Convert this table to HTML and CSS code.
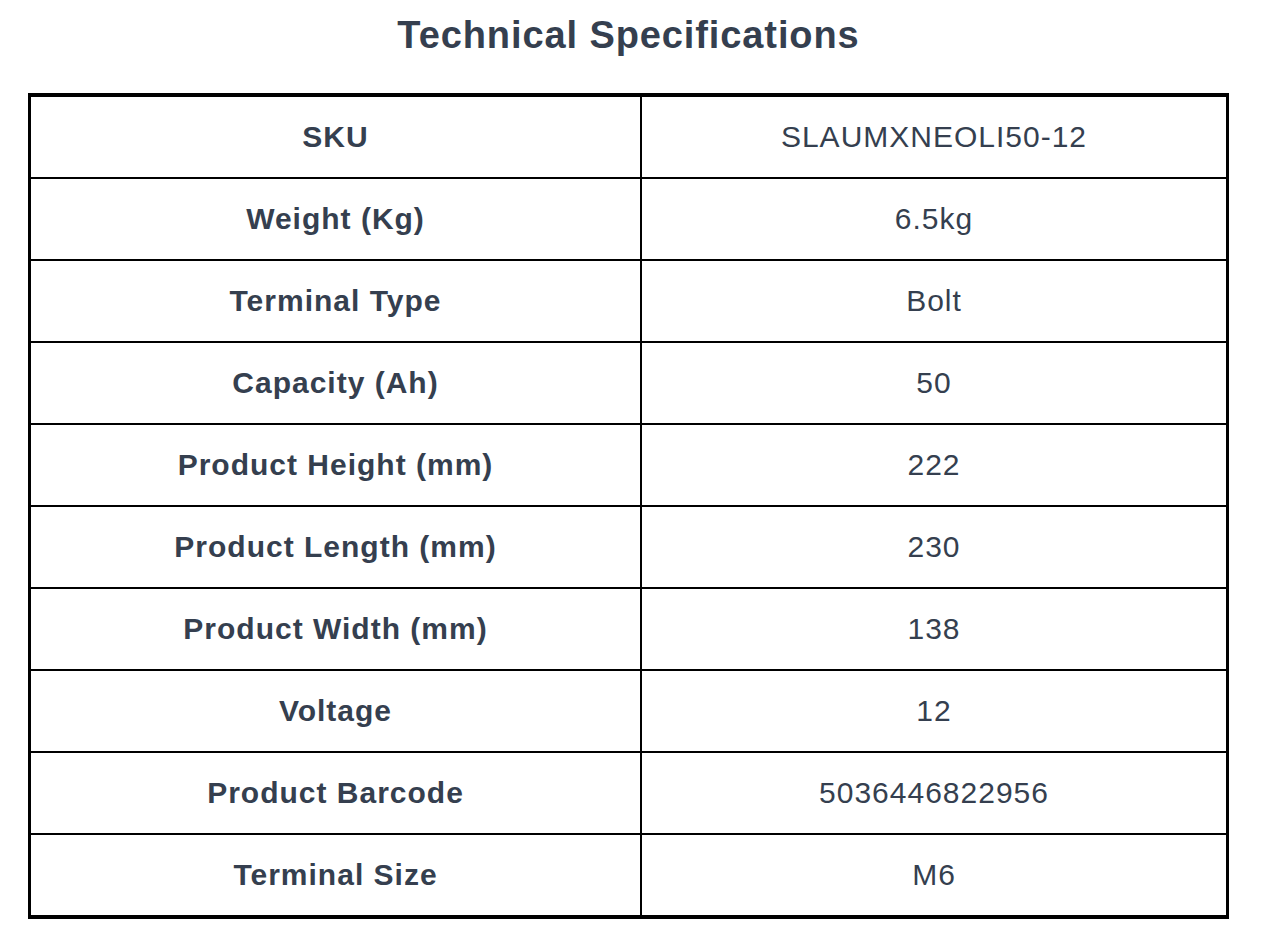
FILE: index.html
```html
<!DOCTYPE html>
<html lang="en">
<head>
<meta charset="utf-8">
<title>Technical Specifications</title>
<link rel="stylesheet" href="styles.css">
</head>
<body>
<div class="page">
  <h1 class="title">Technical Specifications</h1>
  <table class="specs">
    <colgroup><col class="col-key"><col class="col-val"></colgroup>
    <tbody>
      <tr><td class="key">SKU</td><td class="val">SLAUMXNEOLI50-12</td></tr>
      <tr><td class="key">Weight (Kg)</td><td class="val">6.5kg</td></tr>
      <tr><td class="key">Terminal Type</td><td class="val">Bolt</td></tr>
      <tr><td class="key">Capacity (Ah)</td><td class="val">50</td></tr>
      <tr><td class="key">Product Height (mm)</td><td class="val">222</td></tr>
      <tr><td class="key">Product Length (mm)</td><td class="val">230</td></tr>
      <tr><td class="key">Product Width (mm)</td><td class="val">138</td></tr>
      <tr><td class="key">Voltage</td><td class="val">12</td></tr>
      <tr><td class="key">Product Barcode</td><td class="val">5036446822956</td></tr>
      <tr><td class="key">Terminal Size</td><td class="val">M6</td></tr>
    </tbody>
  </table>
</div>
</body>
</html>
```

FILE: styles.css
```css
html, body {
  margin: 0;
  padding: 0;
  background: #ffffff;
}

body {
  font-family: "Liberation Sans", Arial, Helvetica, sans-serif;
  color: #353f4f;
}

.page {
  padding: 0 35px 0 28px;
}

.title {
  margin: 0 0 39px 0;
  padding-top: 16px;
  font-size: 38px;
  line-height: 38px;
  letter-spacing: 0.9px;
  font-weight: bold;
  text-align: center;
  color: #353f4f;
}

.specs {
  width: 1201px;
  table-layout: fixed;
  border-collapse: separate;
  border-spacing: 0;
  border-style: solid;
  border-color: #000000;
  border-width: 4px 3px;
}

.col-key { width: 611px; }
.col-val { width: 584px; }

.specs td {
  height: 80px;
  padding: 0;
  text-align: center;
  vertical-align: middle;
  font-size: 30px;
  line-height: 34px;
  letter-spacing: 1px;
  border-bottom: 2px solid #000000;
}

.specs tr:last-child td {
  border-bottom: none;
}

.specs td.key {
  font-weight: bold;
  border-right: 2px solid #000000;
}

.specs td.val {
  font-weight: normal;
}
```
